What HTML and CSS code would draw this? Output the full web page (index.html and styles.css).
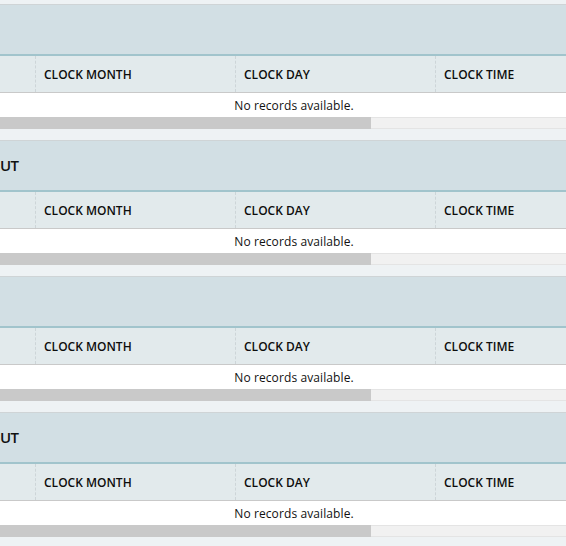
FILE: index.html
```html
<!DOCTYPE html>
<html>
<head>
<meta charset="utf-8">
<link rel="stylesheet" href="styles.css">
</head>
<body>
<div class="page">
  <section class="grid">
    <div class="grid-header"><span class="title"></span></div>
    <div class="col-row">
      <div class="col first"></div>
      <div class="col">CLOCK MONTH</div>
      <div class="col">CLOCK DAY</div>
      <div class="col last">CLOCK TIME</div>
    </div>
    <div class="nodata">No records available.</div>
    <div class="hscroll"><div class="thumb"></div><div class="track"></div></div>
  </section>
  <section class="grid">
    <div class="grid-header"><span class="title">UT</span></div>
    <div class="col-row">
      <div class="col first"></div>
      <div class="col">CLOCK MONTH</div>
      <div class="col">CLOCK DAY</div>
      <div class="col last">CLOCK TIME</div>
    </div>
    <div class="nodata">No records available.</div>
    <div class="hscroll"><div class="thumb"></div><div class="track"></div></div>
  </section>
  <section class="grid">
    <div class="grid-header"><span class="title"></span></div>
    <div class="col-row">
      <div class="col first"></div>
      <div class="col">CLOCK MONTH</div>
      <div class="col">CLOCK DAY</div>
      <div class="col last">CLOCK TIME</div>
    </div>
    <div class="nodata">No records available.</div>
    <div class="hscroll"><div class="thumb"></div><div class="track"></div></div>
  </section>
  <section class="grid">
    <div class="grid-header"><span class="title">UT</span></div>
    <div class="col-row">
      <div class="col first"></div>
      <div class="col">CLOCK MONTH</div>
      <div class="col">CLOCK DAY</div>
      <div class="col last">CLOCK TIME</div>
    </div>
    <div class="nodata">No records available.</div>
    <div class="hscroll"><div class="thumb"></div><div class="track"></div></div>
  </section>
</div>
</body>
</html>
```
FILE: styles.css
```css
* { box-sizing: border-box; }
html, body { margin: 0; padding: 0; }
body {
  background: #eef2f4;
  font-family: "Open Sans", "Noto Sans", sans-serif;
  color: #111;
  overflow: hidden;
}
.page {
  padding-top: 4px;
  display: flex;
  flex-direction: column;
  gap: 11px;
}
.grid {
  border-top: 1px solid #cfd4d6;
  display: flex;
  flex-direction: column;
}
.grid-header {
  height: 51px;
  background: #d2dfe4;
  border-bottom: 2px solid #a1c4cc;
  display: flex;
  align-items: center;
  font-size: 15px;
  font-weight: 600;
  color: #111;
}
.title { line-height: 1; letter-spacing: -0.6px; }
.col-row {
  display: flex;
  height: 37px;
  background: #e2eaec;
  border-bottom: 1px solid #c9c9c9;
}
.col {
  flex: 0 0 200px;
  border-right: 1px dashed #cdd5d8;
  padding-left: 8px;
  display: flex;
  align-items: center;
  font-size: 12px;
  font-weight: 600;
  color: #0d0d0d;
}
.col.first { flex-basis: 36px; padding: 0; }
.col.last { flex: 1 1 auto; border-right: 0; }
.nodata {
  height: 24px;
  background: #fff;
  display: flex;
  align-items: center;
  justify-content: center;
  padding-left: 22px;
  font-size: 12px;
  letter-spacing: 0.1px;
}
.hscroll {
  height: 12px;
  display: flex;
}
.thumb { width: 371px; background: #c9c9c9; }
.track {
  flex: 1;
  background: #f1f1f1;
  border-top: 1px solid #e4e4e4;
  border-bottom: 1px solid #e4e4e4;
}
```
